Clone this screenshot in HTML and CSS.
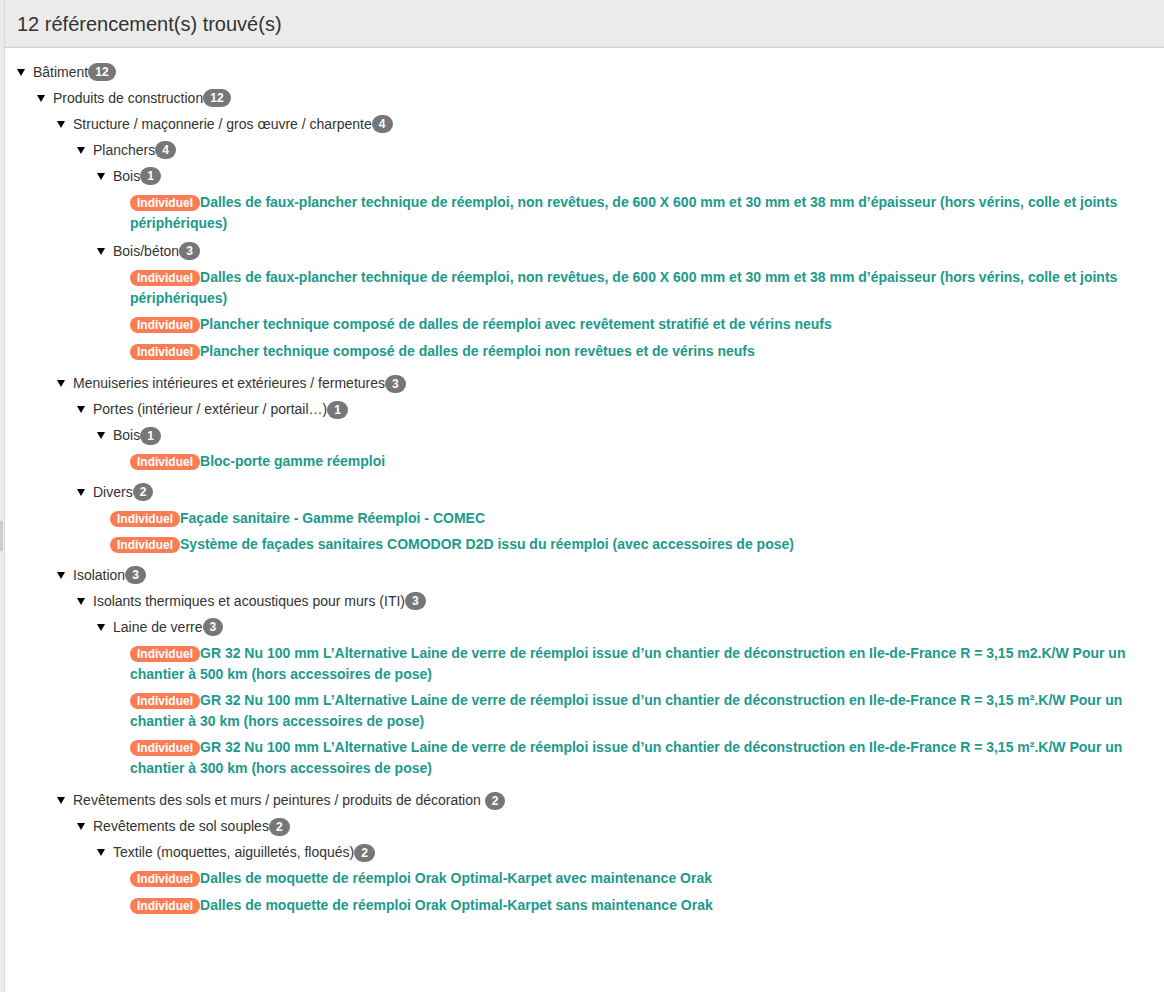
FILE: index.html
```html
<!DOCTYPE html>
<html lang="fr">
<head>
<meta charset="utf-8">
<title>Référencements</title>
<link rel="stylesheet" href="styles.css">
</head>
<body>
<div class="app">
  <aside class="rail"><span class="grip"></span></aside>
  <main class="panel">
    <header class="panel-head"><h1>12 référencement(s) trouvé(s)</h1></header>
    <ul class="tree">
      <li class="node">
        <div class="row"><span class="caret"></span><span class="name">Bâtiment</span><span class="badge">12</span></div>
        <ul>
          <li class="node">
            <div class="row"><span class="caret"></span><span class="name">Produits de construction</span><span class="badge">12</span></div>
            <ul>
              <li class="node">
                <div class="row"><span class="caret"></span><span class="name">Structure / maçonnerie / gros œuvre / charpente</span><span class="badge">4</span></div>
                <ul>
                  <li class="node">
                    <div class="row"><span class="caret"></span><span class="name">Planchers</span><span class="badge">4</span></div>
                    <ul>
                      <li class="node">
                        <div class="row"><span class="caret"></span><span class="name">Bois</span><span class="badge">1</span></div>
                        <ul class="items">
                          <li class="item"><span class="tag">Individuel</span><a href="#">Dalles de faux-plancher technique de réemploi, non revêtues, de 600 X 600 mm et 30 mm et 38 mm d’épaisseur (hors vérins, colle et joints périphériques)</a></li>
                        </ul>
                      </li>
                      <li class="node">
                        <div class="row"><span class="caret"></span><span class="name">Bois/béton</span><span class="badge">3</span></div>
                        <ul class="items">
                          <li class="item"><span class="tag">Individuel</span><a href="#">Dalles de faux-plancher technique de réemploi, non revêtues, de 600 X 600 mm et 30 mm et 38 mm d’épaisseur (hors vérins, colle et joints périphériques)</a></li>
                          <li class="item"><span class="tag">Individuel</span><a href="#">Plancher technique composé de dalles de réemploi avec revêtement stratifié et de vérins neufs</a></li>
                          <li class="item"><span class="tag">Individuel</span><a href="#">Plancher technique composé de dalles de réemploi non revêtues et de vérins neufs</a></li>
                        </ul>
                      </li>
                    </ul>
                  </li>
                </ul>
              </li>
              <li class="node">
                <div class="row"><span class="caret"></span><span class="name">Menuiseries intérieures et extérieures / fermetures</span><span class="badge">3</span></div>
                <ul>
                  <li class="node">
                    <div class="row"><span class="caret"></span><span class="name">Portes (intérieur / extérieur / portail…)</span><span class="badge">1</span></div>
                    <ul>
                      <li class="node">
                        <div class="row"><span class="caret"></span><span class="name">Bois</span><span class="badge">1</span></div>
                        <ul class="items">
                          <li class="item"><span class="tag">Individuel</span><a href="#">Bloc-porte gamme réemploi</a></li>
                        </ul>
                      </li>
                    </ul>
                  </li>
                  <li class="node">
                    <div class="row"><span class="caret"></span><span class="name">Divers</span><span class="badge">2</span></div>
                    <ul class="items">
                      <li class="item"><span class="tag">Individuel</span><a href="#">Façade sanitaire - Gamme Réemploi - COMEC</a></li>
                      <li class="item"><span class="tag">Individuel</span><a href="#">Système de façades sanitaires COMODOR D2D issu du réemploi (avec accessoires de pose)</a></li>
                    </ul>
                  </li>
                </ul>
              </li>
              <li class="node">
                <div class="row"><span class="caret"></span><span class="name">Isolation</span><span class="badge">3</span></div>
                <ul>
                  <li class="node">
                    <div class="row"><span class="caret"></span><span class="name">Isolants thermiques et acoustiques pour murs (ITI)</span><span class="badge">3</span></div>
                    <ul>
                      <li class="node">
                        <div class="row"><span class="caret"></span><span class="name">Laine de verre</span><span class="badge">3</span></div>
                        <ul class="items">
                          <li class="item"><span class="tag">Individuel</span><a href="#">GR 32 Nu 100 mm L’Alternative Laine de verre de réemploi issue d’un chantier de déconstruction en Ile-de-France R = 3,15 m2.K/W Pour un chantier à 500 km (hors accessoires de pose)</a></li>
                          <li class="item"><span class="tag">Individuel</span><a href="#">GR 32 Nu 100 mm L’Alternative Laine de verre de réemploi issue d’un chantier de déconstruction en Ile-de-France R = 3,15 m².K/W Pour un chantier à 30 km (hors accessoires de pose)</a></li>
                          <li class="item"><span class="tag">Individuel</span><a href="#">GR 32 Nu 100 mm L’Alternative Laine de verre de réemploi issue d’un chantier de déconstruction en Ile-de-France R = 3,15 m².K/W Pour un chantier à 300 km (hors accessoires de pose)</a></li>
                        </ul>
                      </li>
                    </ul>
                  </li>
                </ul>
              </li>
              <li class="node">
                <div class="row"><span class="caret"></span><span class="name">Revêtements des sols et murs / peintures / produits de décoration </span><span class="badge">2</span></div>
                <ul>
                  <li class="node">
                    <div class="row"><span class="caret"></span><span class="name">Revêtements de sol souples</span><span class="badge">2</span></div>
                    <ul>
                      <li class="node">
                        <div class="row"><span class="caret"></span><span class="name">Textile (moquettes, aiguilletés, floqués)</span><span class="badge">2</span></div>
                        <ul class="items">
                          <li class="item"><span class="tag">Individuel</span><a href="#">Dalles de moquette de réemploi Orak Optimal-Karpet avec maintenance Orak</a></li>
                          <li class="item"><span class="tag">Individuel</span><a href="#">Dalles de moquette de réemploi Orak Optimal-Karpet sans maintenance Orak</a></li>
                        </ul>
                      </li>
                    </ul>
                  </li>
                </ul>
              </li>
            </ul>
          </li>
        </ul>
      </li>
    </ul>
  </main>
</div>
</body>
</html>
```

FILE: styles.css
```css
* { box-sizing: border-box; }

html, body {
  margin: 0;
  padding: 0;
  height: 100%;
}

body {
  font-family: "Liberation Sans", Arial, sans-serif;
  font-size: 14px;
  color: #333;
  background: #fff;
}

.app {
  display: flex;
  min-height: 100vh;
}

.rail {
  flex: 0 0 5px;
  background: #ebebeb;
  border-right: 1px solid #d9d9d9;
  display: flex;
  align-items: center;
}

.grip {
  display: block;
  width: 3px;
  height: 30px;
  margin-top: 80px;
  background-image: radial-gradient(circle, #bdbdbd 0.6px, transparent 0.9px);
  background-size: 2px 2px;
}

.panel {
  flex: 1 1 auto;
  min-width: 0;
}

.panel-head {
  background: #ebebeb;
  height: 48px;
  border-bottom: 1px solid #d3d3d3;
  box-shadow: inset 0 -4px 0 -3px #e2e2e2;
  padding: 0 12px;
  display: flex;
  align-items: center;
}

.panel-head h1 {
  margin: 0;
  font-size: 20px;
  font-weight: normal;
  color: #333;
  line-height: 24px;
}

.tree {
  list-style: none;
  margin: 0;
  padding: 8px 15px 2px 11px;
}

.tree ul {
  list-style: none;
  margin: 0;
  padding: 0 0 2px 20px;
}

.node {
  margin-top: 6.15px;
}

.node:first-child {
  margin-top: 6px;
}

.item {
  margin-top: 6px;
}

.row {
  line-height: 20px;
  height: 20px;
  white-space: nowrap;
}

.caret {
  display: inline-block;
  width: 17px;
  height: 20px;
  vertical-align: top;
  position: relative;
}

.caret::before {
  content: "";
  position: absolute;
  left: 1px;
  top: 7px;
  border-left: 4px solid transparent;
  border-right: 4px solid transparent;
  border-top: 7px solid #000;
}

.name {
  color: #333;
}

.badge {
  display: inline-block;
  min-width: 10px;
  padding: 3px 7px;
  font-size: 12px;
  font-weight: bold;
  line-height: 12px;
  color: #fff;
  text-align: center;
  white-space: nowrap;
  vertical-align: middle;
  background-color: #777;
  border-radius: 10px;
  margin-top: -2px;
}

.items .item {
  margin-left: 14px;
  line-height: 20.5px;
}

.tag {
  display: inline-block;
  padding: 2px 7px;
  font-size: 12px;
  font-weight: bold;
  line-height: 12px;
  color: #fff;
  background-color: #fb7d55;
  border-radius: 9px;
  vertical-align: 0;
}

.item a {
  color: #1c9a8c;
  font-weight: bold;
  text-decoration: none;
}
```
